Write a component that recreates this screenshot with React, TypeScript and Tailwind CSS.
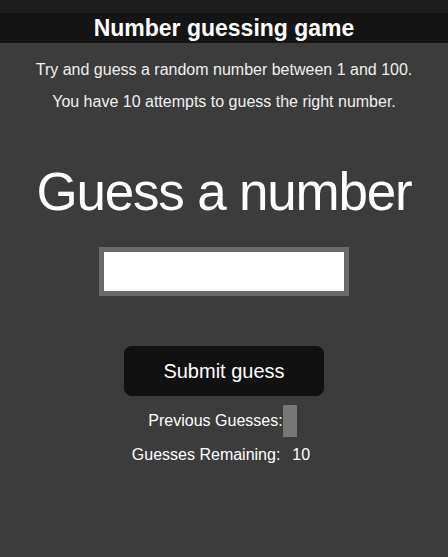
import React from "react";

const App = () => {
  return (
    <div className="min-h-[557px] bg-[#3c3c3c] text-white font-['Liberation_Sans',Arial,sans-serif] flex flex-col items-center">
      {/* header */}
      <div className="w-full bg-[#141414] border-t-[13px] border-[#1d1d1d] h-[43px] flex items-center justify-center">
        <h1 className="text-[23px] font-bold leading-none">Number guessing game</h1>
      </div>

      <p className="mt-[15px] text-[16px] text-[#f0f0f0]">Try and guess a random number between 1 and 100.</p>
      <p className="mt-[8px] text-[16px] text-[#f0f0f0]">You have 10 attempts to guess the right number.</p>

      <h2 className="mt-[51px] text-[53px] leading-none tracking-[-1.2px]">Guess a number</h2>

      <input
        type="text"
        className="mt-[29px] w-[250px] h-[49px] bg-white border-[5px] border-[#6a6a6a] outline-none"
      />

      <button className="mt-[50px] w-[200px] h-[50px] bg-[#111111] rounded-lg text-[20px]">Submit guess</button>

      <div className="mt-[9px] mr-[3px] flex items-center text-[16px]">
        <span>Previous Guesses:</span>
        <span className="w-[14px] h-[32px] bg-[#777777]"></span>
      </div>

      <div className="mt-[6px] mr-[6px] flex items-center text-[16px]">
        <span>Guesses Remaining:</span>
        <span className="ml-[12px]">10</span>
      </div>
    </div>
  );
};

export default App;
